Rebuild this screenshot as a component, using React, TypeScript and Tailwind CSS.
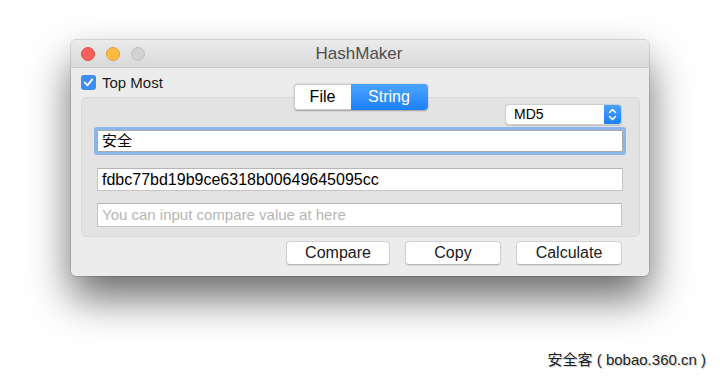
import React from "react";

const font = { fontFamily: '"Liberation Sans", Arial, "Noto Sans CJK SC", sans-serif' };

function Light({ bg, border }: { bg: string; border: string }) {
  return <div className={`w-[14px] h-[14px] rounded-full border ${bg} ${border}`} />;
}

function Btn({ label, w }: { label: string; w: string }) {
  return (
    <div
      className={`${w} h-[24px] flex items-center justify-center bg-white rounded-[4px] border border-[#d0d0d0] border-b-[#b8b8b8] text-[16px] text-[#1a1a1a] shadow-[0_1px_1px_rgba(0,0,0,0.08)]`}
    >
      {label}
    </div>
  );
}

export default function App() {
  return (
    <div className="w-[720px] h-[378px] bg-white flex flex-col overflow-hidden" style={font}>
      <div className="pt-[40px] pl-[71px]">
        <div className="w-[578px] h-[236px] rounded-[5px] bg-[#ececec] shadow-[0_22px_42px_rgba(0,0,0,0.58),0_0_0_1px_rgba(0,0,0,0.12)] flex flex-col overflow-hidden">
          {/* title bar */}
          <div className="h-[28px] flex items-center relative bg-gradient-to-b from-[#ebebeb] to-[#d9d9d9] border-b border-[#c9c9c9] shrink-0">
            <div className="flex items-center gap-[11px] pl-[10px]">
              <Light bg="bg-[#fc605c]" border="border-[#df4a45]" />
              <Light bg="bg-[#fdbc40]" border="border-[#de9f34]" />
              <Light bg="bg-[#d2d2d2]" border="border-[#c0c0c0]" />
            </div>
            <div className="flex-1 text-center text-[17px] text-[#4d4d4d] pr-[76px]">HashMaker</div>
          </div>
          {/* body */}
          <div className="flex flex-col px-[10px] pr-[9px] pt-[7px]">
            <div className="flex items-center gap-[6px] h-[15px]">
              <div className="w-[15px] h-[15px] rounded-[3px] bg-[#3c8ef6] flex items-center justify-center">
                <svg width="15" height="15" viewBox="0 0 15 15">
                  <path d="M3.8 7.6 L6.4 10.3 L11.2 4.4" fill="none" stroke="white" strokeWidth="1.9" strokeLinecap="round" strokeLinejoin="round" />
                </svg>
              </div>
              <span className="text-[15px] text-[#1a1a1a] leading-none">Top Most</span>
            </div>
            {/* tabs */}
            <div className="flex justify-center mt-[-6px] relative z-10">
              <div className="flex h-[26px] rounded-[4px] shadow-[0_0.5px_1.5px_rgba(0,0,0,0.3)]">
                <div className="w-[57px] flex items-center justify-center bg-white rounded-l-[4px] border border-[#cdcdcd] border-r-0 text-[16px] text-black">
                  File
                </div>
                <div className="w-[77px] flex items-center justify-center rounded-r-[4px] bg-gradient-to-b from-[#4ba4fd] to-[#1c80f6] text-[16px] text-white">
                  String
                </div>
              </div>
            </div>
            {/* group box */}
            <div className="mt-[-13px] h-[140px] rounded-[5px] bg-[#e3e3e3] border border-[#d8d8d8] flex flex-col pl-[15px] pr-[16px] pt-[6px]">
              <div className="flex justify-end pr-[1px]">
                <div className="w-[117px] h-[21px] flex rounded-[4px] bg-white border border-[#cfcfcf] shadow-[0_0.5px_1px_rgba(0,0,0,0.15)] overflow-hidden">
                  <div className="flex-1 flex items-center pl-[8px] text-[14px] text-black">MD5</div>
                  <div className="w-[17px] bg-gradient-to-b from-[#4aa2fc] to-[#1b7ff6] flex items-center justify-center">
                    <svg width="11" height="17" viewBox="0 0 11 17">
                      <path d="M2.5 6.5 L5.5 3.5 L8.5 6.5" fill="none" stroke="white" strokeWidth="1.5" strokeLinecap="round" strokeLinejoin="round" />
                      <path d="M2.5 10.5 L5.5 13.5 L8.5 10.5" fill="none" stroke="white" strokeWidth="1.5" strokeLinecap="round" strokeLinejoin="round" />
                    </svg>
                  </div>
                </div>
              </div>
              <div className="mt-[5px] h-[22px] bg-white border border-[#a9a9a9] ring-[3px] ring-[#8db6ea] rounded-[1px] flex items-center pl-[4px] text-[15px] text-black" style={{ fontFamily: '"Liberation Sans", "Noto Sans CJK SC", sans-serif' }}>
                安全
              </div>
              <div className="mt-[16px] h-[23px] bg-white border border-[#c4c4c4] border-t-[#b5b5b5] flex items-center pl-[4px] text-[16px] text-black">
                fdbc77bd19b9ce6318b00649645095cc
              </div>
              <div className="mt-[12px] h-[24px] bg-white border border-[#c4c4c4] border-t-[#b5b5b5] flex items-center pl-[4px] text-[15px] text-[#b5b5b5] mr-[1px]">
                You can input compare value at here
              </div>
            </div>
            {/* buttons */}
            <div className="flex justify-end gap-[15px] pr-[18px] mt-[4px]">
              <Btn label="Compare" w="w-[104px]" />
              <Btn label="Copy" w="w-[96px]" />
              <Btn label="Calculate" w="w-[106px]" />
            </div>
          </div>
        </div>
      </div>
      <div className="flex justify-end pr-[14px] mt-[73px]">
        <span
          className="text-[15px] text-[#222]"
          style={{ fontFamily: '"Liberation Sans", "Noto Sans CJK SC", sans-serif', textShadow: "0 0 2px #fff, 1px 1px 1px #bbb" }}
        >
          安全客 ( bobao.360.cn )
        </span>
      </div>
    </div>
  );
}
